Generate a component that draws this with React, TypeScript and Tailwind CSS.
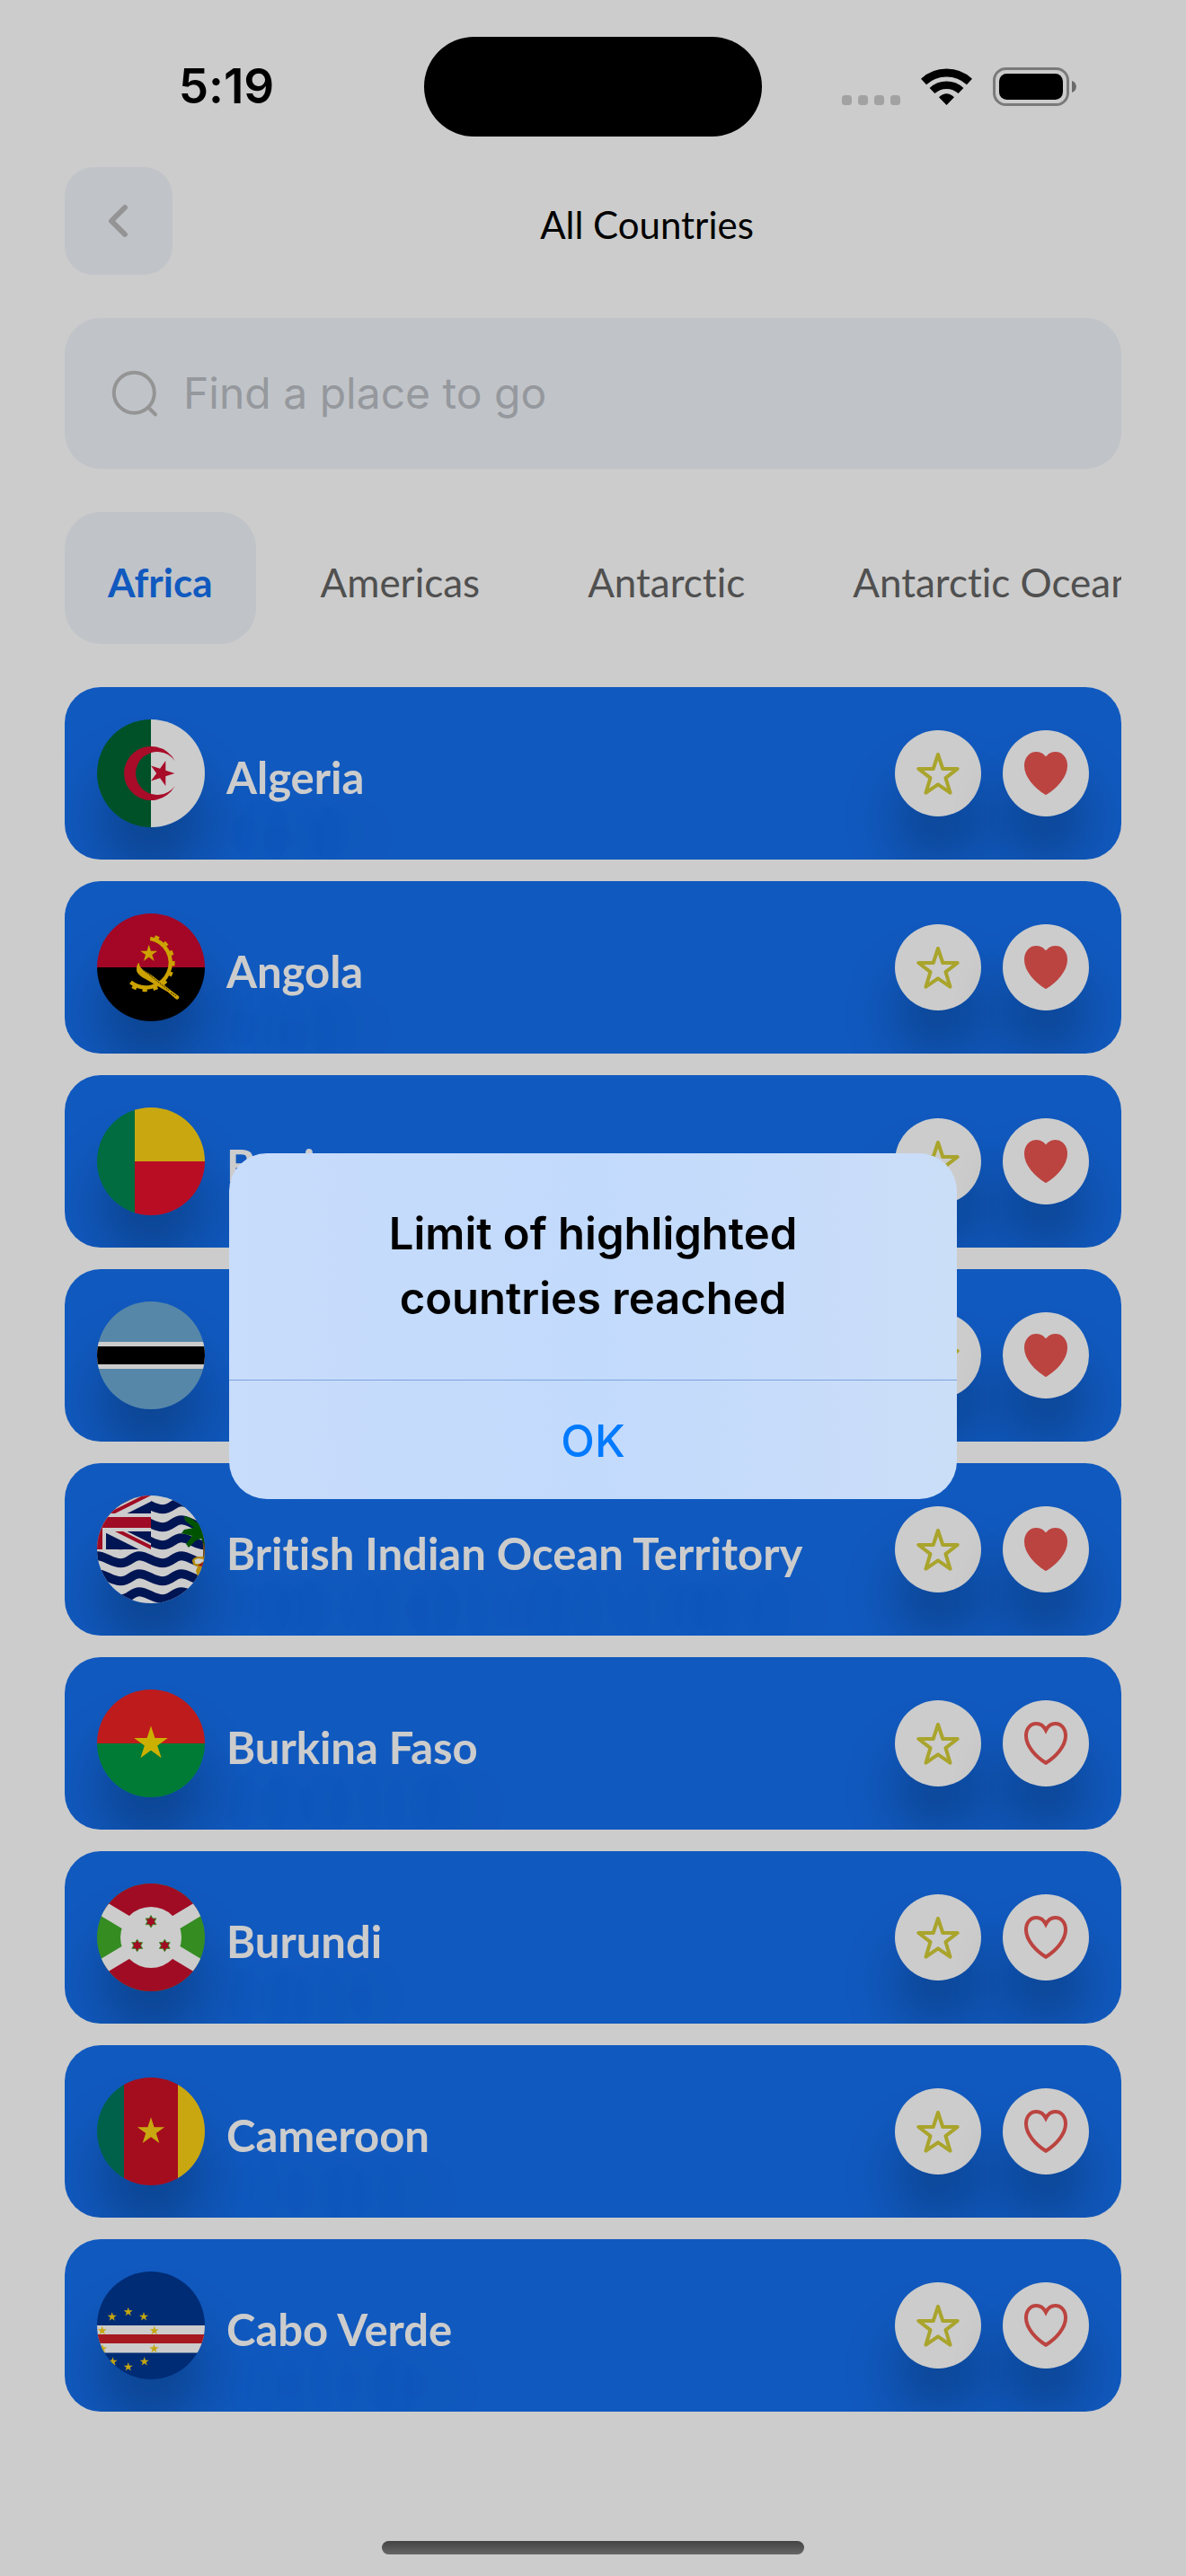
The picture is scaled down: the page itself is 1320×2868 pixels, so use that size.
import React, { useState } from "react";

function starPoints(cx: number, cy: number, r: number, rotation = -90, arms = 5, innerRatio = 0.382) {
  return Array.from({ length: arms * 2 }, (_, i) => {
    const radius = i % 2 === 0 ? r : r * innerRatio;
    const angle = ((rotation + (i * 180) / arms) * Math.PI) / 180;
    return `${(cx + radius * Math.cos(angle)).toFixed(2)},${(cy + radius * Math.sin(angle)).toFixed(2)}`;
  }).join(" ");
}

function Algeria() {
  return (
    <>
      <rect width="60" height="120" fill="#006633" />
      <rect x="60" width="60" height="120" fill="#fff" />
      <path d="M86.6 46.1A30 30 0 1 0 86.6 73.9A24 24 0 1 1 86.6 46.1Z" fill="#d21034" />
      <polygon points={starPoints(71.8, 60, 14.6, 0)} fill="#d21034" />
    </>
  );
}

function Angola() {
  return (
    <>
      <rect width="120" height="60" fill="#cc092f" />
      <rect y="60" width="120" height="60" fill="#000" />
      <path d="M59.2 27.8A27.5 27.5 0 1 1 37.4 76.6" fill="none" stroke="#ffcb00" strokeWidth="4.4" />
      <path
        d="M59.6 25.3A30 30 0 1 1 36 78.6"
        fill="none"
        stroke="#ffcb00"
        strokeWidth="4.6"
        strokeDasharray="5 6.8"
        strokeDashoffset="-4.7"
      />
      <polygon points={starPoints(57.7, 44.8, 10)} fill="#ffcb00" />
      <path
        d="M46.6 54.6C44.4 57 43.6 60 44.2 64.5C46 68 49 70.5 53 72.5L78.6 87.2L88 95.6C90.4 96.4 92 94 91.2 92.2L82 85.4L62.2 69.8L50.7 62.2C48 60 47 58 46.6 54.6Z"
        fill="#ffcb00"
      />
      <path d="M51 62.6L80 85.8M82 88L88 92" stroke="#000" strokeWidth="0.8" strokeDasharray="2 1" />
    </>
  );
}

function Benin() {
  return (
    <>
      <rect width="42" height="120" fill="#008751" />
      <rect x="42" width="78" height="60" fill="#fcd116" />
      <rect x="42" y="60" width="78" height="60" fill="#e8112d" />
    </>
  );
}

function Botswana() {
  return (
    <>
      <rect width="120" height="120" fill="#6da9d2" />
      <rect y="45" width="120" height="30" fill="#fff" />
      <rect y="50" width="120" height="20" fill="#000" />
    </>
  );
}

function IndianOcean() {
  const waves = [-37.7, -17.7, 2.3, 22.3, 42.3, 62.3, 82.3, 102.3];
  return (
    <>
      <defs>
        <clipPath id="canton">
          <rect width="60" height="60" />
        </clipPath>
        <clipPath id="saltire">
          <path d="M0 30H60V60ZM0 30V60H-60ZM0 30H-60V0ZM0 30V0H60Z" />
        </clipPath>
      </defs>
      <rect width="120" height="120" fill="#fff" />
      {waves.map((y) => (
        <path
          key={y}
          d={`M-46.4 ${y + 5}c10 0 16 8 26 8s12-8 20.7-8s16 8 26 8s12-8 20.7-8s16 8 26 8s12-8 20.7-8s16 8 26 8s12-8 20.7-8`}
          fill="none"
          stroke="#001b69"
          strokeWidth="10"
        />
      ))}
      <g clipPath="url(#canton)">
        <rect width="60" height="60" fill="#001b69" />
        <path d="M-60 0L60 60M60 0L-60 60" stroke="#fff" strokeWidth="12" />
        <path d="M-60 0L60 60M60 0L-60 60" stroke="#c8102e" strokeWidth="8" clipPath="url(#saltire)" />
        <path d="M0 0V60M-60 30H60" stroke="#fff" strokeWidth="20" />
        <path d="M0 0V60M-60 30H60" stroke="#c8102e" strokeWidth="12" />
      </g>
      <path d="M116 38C119 46 120 56 119 70" fill="none" stroke="#8a5a1c" strokeWidth="2.5" />
      <path
        d="M97 23L104 25L114 32L115 23L120 26V56L116 48L110 50L102 58L99 54L106 45L94 42L97 38L108 36L98 28Z"
        fill="#006a00"
      />
      <path d="M106 72C108 68 114 67 120 69V76L117 78L118 84L112 90L110 84L112 79C108 79 106 76 106 72Z" fill="#e0b010" />
      <path d="M108.5 72C111 69.5 116 70 120 72L114 76L109.5 76Z" fill="#fff" />
      <path d="M112 78L119 74V79Z" fill="#c8102e" />
    </>
  );
}

function BurkinaFaso() {
  return (
    <>
      <rect width="120" height="60" fill="#ee2224" />
      <rect y="60" width="120" height="60" fill="#009a44" />
      <polygon points={starPoints(60, 60.2, 19.8)} fill="#ffdc00" />
    </>
  );
}

function Burundi() {
  const stars: [number, number][] = [
    [60, 42.3],
    [44.7, 69],
    [75.3, 69],
  ];
  return (
    <>
      <rect width="120" height="120" fill="#43b02a" />
      <path d="M-40 0H160L60 60ZM-40 120H160L60 60Z" fill="#c8102e" />
      <path d="M-40 0L160 120M160 0L-40 120" stroke="#fff" strokeWidth="16.4" />
      <circle cx="60" cy="60" r="34" fill="#fff" />
      {stars.map(([x, y]) => (
        <polygon
          key={`${x}-${y}`}
          points={starPoints(x, y, 6.8, -90, 6, 0.577)}
          fill="#c8102e"
          stroke="#43b02a"
          strokeWidth="0.9"
        />
      ))}
    </>
  );
}

function Cameroon() {
  return (
    <>
      <rect width="30" height="120" fill="#007a5e" />
      <rect x="30" width="60" height="120" fill="#ce1126" />
      <rect x="90" width="30" height="120" fill="#fcd116" />
      <polygon points={starPoints(60, 60.2, 15.9)} fill="#fcd116" />
    </>
  );
}

function CaboVerde() {
  const stars: [number, number][] = [
    [16.7, 50.5],
    [34.7, 45],
    [52, 50.3],
    [5.7, 65.9],
    [63.7, 65.9],
    [6, 86],
    [63.5, 86],
    [17.5, 100.5],
    [34.7, 106.3],
    [52.7, 100.3],
  ];
  return (
    <>
      <rect width="120" height="120" fill="#003893" />
      <rect y="60" width="120" height="30.5" fill="#fff" />
      <rect y="70" width="120" height="10" fill="#cf2027" />
      {stars.map(([x, y]) => (
        <polygon key={`${x}-${y}`} points={starPoints(x, y, 5.3)} fill="#f7d116" />
      ))}
    </>
  );
}

const countries: { name: string; Flag: () => React.ReactElement; liked: boolean }[] = [
  { name: "Algeria", Flag: Algeria, liked: true },
  { name: "Angola", Flag: Angola, liked: true },
  { name: "Benin", Flag: Benin, liked: true },
  { name: "Botswana", Flag: Botswana, liked: true },
  { name: "British Indian Ocean Territory", Flag: IndianOcean, liked: true },
  { name: "Burkina Faso", Flag: BurkinaFaso, liked: false },
  { name: "Burundi", Flag: Burundi, liked: false },
  { name: "Cameroon", Flag: Cameroon, liked: false },
  { name: "Cabo Verde", Flag: CaboVerde, liked: false },
];

const regions = ["Africa", "Americas", "Antarctic", "Antarctic Ocean"];

function StatusBar() {
  return (
    <div className="grid grid-cols-[1fr_376px_1fr] items-center pt-[41px]">
      <span className="pl-8 text-center text-[53px] leading-none font-semibold text-black">5:19</span>
      <div className="h-[111px] rounded-full bg-black" />
      <div className="flex items-end justify-center pr-8">
        <svg viewBox="0 0 66 43" className="h-[43px] w-[66px]" fill="#cbcbcb">
          <rect x="0" y="31" width="11" height="11" rx="3.5" />
          <rect x="18" y="31" width="11" height="11" rx="3.5" />
          <rect x="36" y="31" width="11" height="11" rx="3.5" />
          <rect x="54" y="31" width="11" height="11" rx="3.5" />
        </svg>
        <svg viewBox="0 0 57 43" className="ml-[22px] h-[43px] w-[57px]" fill="none" stroke="#000">
          <path d="M3 16A37.5 37.5 0 0 1 54 16" strokeWidth="9" />
          <path d="M12.5 26A23.5 23.5 0 0 1 44.5 26" strokeWidth="8.5" />
          <path d="M20 33.2Q28.5 25.5 37 33.2L28.5 42Z" fill="#000" stroke="none" />
        </svg>
        <svg viewBox="0 0 94 43" className="ml-[23px] h-[43px] w-[94px]">
          <rect x="1.5" y="1.5" width="82" height="40" rx="13" fill="none" stroke="#999" strokeWidth="3" />
          <rect x="7" y="7" width="71" height="29" rx="8.5" fill="#000" />
          <path d="M88 15C94.5 17 94.5 26 88 28Z" fill="#858585" />
        </svg>
      </div>
    </div>
  );
}

function StarIcon() {
  return (
    <svg viewBox="0 0 48 48" className="size-12" fill="none" stroke="#d4ce37" strokeWidth="4" strokeLinejoin="round">
      <path d="M24 3L29.3 19H45.7L32.5 29.2L37.5 45.7L24 36.3L10.5 45.7L15.5 29.2L2.3 19H18.7Z" />
    </svg>
  );
}

function HeartIcon({ filled }: { filled: boolean }) {
  return (
    <svg viewBox="0 0 48 48" className="size-12" fill={filled ? "#ea5551" : "none"} stroke="#ea5551" strokeWidth="4">
      <path d="M24 45.7C13 39 2 27 2 15.8C2 7.5 6.8 2 13.5 2C18 2 21.5 4.5 24 9.3C26.5 4.5 30 2 34.5 2C41.2 2 46 7.5 46 15.8C46 27 35 39 24 45.7Z" />
    </svg>
  );
}

export default function App() {
  const [open, setOpen] = useState(true);
  const [region, setRegion] = useState("Africa");

  return (
    <div className="flex min-h-screen flex-col bg-white font-['Inter',sans-serif] [font-variant-ligatures:none]">
      <StatusBar />

      <main className="px-[72px] pt-[34px]">
        <header className="flex items-center">
          <button
            type="button"
            aria-label="Back"
            className="flex size-[120px] items-center justify-center rounded-[32px] bg-[#f1f5fb]"
          >
            <svg
              viewBox="0 0 60 60"
              className="size-[60px]"
              fill="none"
              stroke="#b9b9b9"
              strokeWidth="6"
              strokeLinecap="round"
              strokeLinejoin="round"
            >
              <path d="M37 15L22 30L37 45" />
            </svg>
          </button>
          <h1 className="flex-1 pt-2 text-center font-['Lato',sans-serif] text-[42px] leading-[50px] text-black">
            All Countries
          </h1>
        </header>

        <label className="mt-12 flex h-[168px] items-center gap-6 rounded-[40px] bg-[#f1f5fb] px-12">
          <svg
            viewBox="0 0 60 60"
            className="size-[60px] shrink-0"
            fill="none"
            stroke="#b9b9b9"
            strokeWidth="4"
            strokeLinecap="round"
          >
            <circle cx="29.3" cy="29.3" r="22.5" />
            <path d="M45.5 46L53 53.5" />
          </svg>
          <input
            type="text"
            aria-label="Find a place to go"
            placeholder="Find a place to go"
            className="min-w-0 flex-1 bg-transparent text-[48px] outline-none placeholder:text-[#bbbfc5]"
          />
        </label>

        <nav className="mt-12 flex gap-6 overflow-hidden">
          {regions.map((name) => (
            <button
              key={name}
              type="button"
              aria-pressed={name === region}
              onClick={() => setRegion(name)}
              className={
                name === region
                  ? "h-[147px] shrink-0 rounded-[40px] bg-[#f1f5fb] px-12 pt-2 font-['Lato',sans-serif] text-[44px] font-bold whitespace-nowrap text-[#1570ef]"
                  : "h-[147px] shrink-0 px-12 pt-2 font-['Lato',sans-serif] text-[44px] whitespace-nowrap text-[#646464]"
              }
            >
              {name}
            </button>
          ))}
        </nav>

        <ul className="mt-12 flex flex-col gap-6">
          {countries.map(({ name, Flag, liked }) => (
            <li
              key={name}
              className="flex h-[192px] items-center gap-6 overflow-hidden rounded-[40px] bg-[#1570ef] px-9"
            >
              <svg
                viewBox="0 0 120 120"
                className="size-[120px] shrink-0 rounded-full shadow-[0_50px_60px_rgba(0,0,0,0.24)]"
                aria-hidden="true"
              >
                <Flag />
              </svg>
              <span className="flex-1 pt-2 font-['Lato',sans-serif] text-[49px] leading-[58px] font-bold text-white [text-shadow:0_60px_60px_rgba(0,0,0,0.16)]">
                {name}
              </span>
              <button
                type="button"
                aria-label={`Highlight ${name}`}
                className="flex size-24 items-center justify-center rounded-full bg-white shadow-[0_50px_60px_rgba(0,0,0,0.24)]"
              >
                <StarIcon />
              </button>
              <button
                type="button"
                aria-label={`Like ${name}`}
                aria-pressed={liked}
                className="flex size-24 items-center justify-center rounded-full bg-white shadow-[0_50px_60px_rgba(0,0,0,0.24)]"
              >
                <HeartIcon filled={liked} />
              </button>
            </li>
          ))}
        </ul>
      </main>

      <div className="mt-auto flex justify-center pb-6">
        <div className="h-[15px] w-[470px] rounded-full bg-linear-to-b from-[#555] to-[#808080]" />
      </div>

      {open && (
        <div className="fixed inset-0 flex items-center justify-center bg-black/20 pt-[85px]">
          <div
            role="alertdialog"
            aria-labelledby="alert-title"
            className="w-[810px] overflow-hidden rounded-[42px] bg-linear-to-r from-[#c8dcfb] via-[#c2dafc] to-[#cbdef8]"
          >
            <h2
              id="alert-title"
              className="px-40 py-[54px] text-center text-[49px] leading-[72px] font-semibold text-black"
            >
              Limit of highlighted countries reached
            </h2>
            <button
              type="button"
              onClick={() => setOpen(false)}
              className="h-[133px] w-full border-t border-[#7da3de] pt-1 text-[49px] font-medium text-[#007aff]"
            >
              OK
            </button>
          </div>
        </div>
      )}
    </div>
  );
}
